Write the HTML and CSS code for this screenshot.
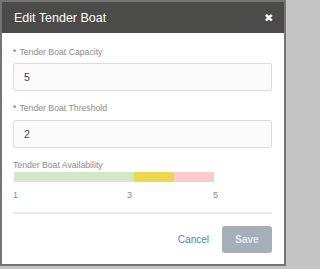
FILE: index.html
```html
<!DOCTYPE html>
<html>
<head>
<meta charset="utf-8">
<link rel="stylesheet" href="styles.css">
</head>
<body>
<div class="dialog">
  <div class="header">
    <span class="title">Edit Tender Boat</span>
    <span class="close">&#x2715;</span>
  </div>
  <div class="content">
    <div class="label"><span class="req">*</span>Tender Boat Capacity</div>
    <div class="input">5</div>
    <div class="label second"><span class="req">*</span>Tender Boat Threshold</div>
    <div class="input">2</div>
    <div class="label third">Tender Boat Availability</div>
    <div class="bar">
      <div class="seg green"></div>
      <div class="seg yellow"></div>
      <div class="seg pink"></div>
    </div>
    <div class="scale">
      <span class="tick" style="left:0px">1</span>
      <span class="tick" style="left:114px">3</span>
      <span class="tick" style="left:200px">5</span>
    </div>
    <div class="divider"></div>
    <div class="footer">
      <span class="cancel">Cancel</span>
      <span class="save">Save</span>
    </div>
  </div>
</div>
</body>
</html>
```
FILE: styles.css
```css
html, body {
  margin: 0;
  padding: 0;
}
html {
  background: #c4c4c4;
}
body {
  width: 288px;
  height: 269px;
  font-family: "Liberation Sans", Arial, sans-serif;
  overflow: hidden;
}
.dialog {
  width: 282px;
  height: 262px;
  border: 2px solid #757575;
  background: #ffffff;
  display: flex;
  flex-direction: column;
}
.header {
  height: 31px;
  background: #4b4b49;
  display: flex;
  align-items: center;
  justify-content: space-between;
  padding: 0 11px 0 12px;
  flex-shrink: 0;
}
.title {
  color: #ffffff;
  font-size: 12.5px;
  padding-top: 1px;
}
.close {
  color: #ffffff;
  font-size: 9px;
  font-weight: bold;
  -webkit-text-stroke: 1px #ffffff;
  padding-top: 1px;
}
.content {
  padding: 13px 12px 0 11px;
  display: flex;
  flex-direction: column;
}
.label {
  font-size: 8.7px;
  line-height: 12px;
  color: #8a8a8a;
  margin-bottom: 5px;
}
.label.second {
  margin-top: 11px;
  margin-bottom: 6px;
}
.label.third {
  margin-top: 11px;
  margin-bottom: 1px;
}
.req {
  color: #e0393e;
  margin-right: 3px;
}
.input {
  height: 26px;
  border: 1px solid #dcdcdc;
  border-radius: 2px;
  background: #fbfbfb;
  font-size: 10.5px;
  color: #444444;
  display: flex;
  align-items: center;
  padding-left: 10px;
}
.bar {
  display: flex;
  width: 200px;
  height: 10px;
  margin-left: 1px;
}
.seg { height: 100%; }
.green { width: 120px; background: #d1e9c8; }
.yellow { width: 40px; background: #ecd84e; }
.pink { width: 40px; background: #ffcaca; }
.scale {
  position: relative;
  height: 12px;
  margin-top: 7px;
}
.tick {
  position: absolute;
  top: 0;
  font-size: 9px;
  line-height: 12px;
  color: #8a8a8a;
}
.divider {
  height: 2px;
  background: #e8e8e8;
  margin-top: 11px;
}
.footer {
  display: flex;
  justify-content: flex-end;
  align-items: center;
  margin-top: 12px;
  gap: 13px;
}
.cancel {
  font-size: 10px;
  color: #3f87b5;
}
.save {
  width: 50px;
  height: 27px;
  border-radius: 3px;
  background: #a6aeb9;
  color: #e4e8ee;
  font-size: 10px;
  font-weight: bold;
  display: flex;
  align-items: center;
  justify-content: center;
}
```
